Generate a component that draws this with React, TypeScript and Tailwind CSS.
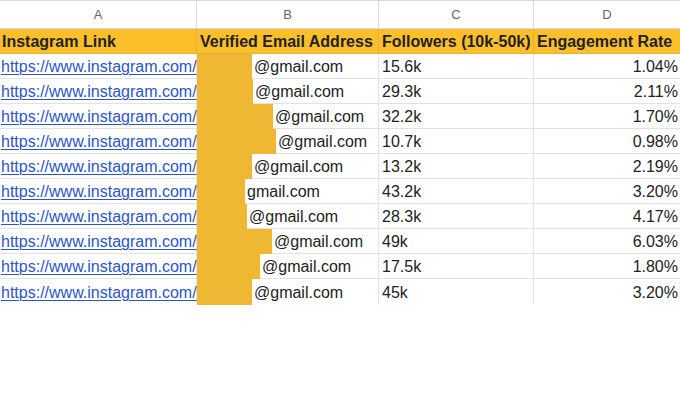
const rows = [
  { cover: 55, email: '@gmail.com', followers: '15.6k', rate: '1.04%' },
  { cover: 56, email: '@gmail.com', followers: '29.3k', rate: '2.11%' },
  { cover: 76, email: '@gmail.com', followers: '32.2k', rate: '1.70%' },
  { cover: 79, email: '@gmail.com', followers: '10.7k', rate: '0.98%' },
  { cover: 55, email: '@gmail.com', followers: '13.2k', rate: '2.19%' },
  { cover: 48, email: 'gmail.com', followers: '43.2k', rate: '3.20%' },
  { cover: 50, email: '@gmail.com', followers: '28.3k', rate: '4.17%' },
  { cover: 75, email: '@gmail.com', followers: '49k', rate: '6.03%' },
  { cover: 63, email: '@gmail.com', followers: '17.5k', rate: '1.80%' },
  { cover: 55, email: '@gmail.com', followers: '45k', rate: '3.20%' },
];

const cols = 'grid grid-cols-[197px_182px_155px_146px]';

export default function App() {
  return (
    <div className="w-[680px] h-[409px] overflow-hidden bg-white font-['Liberation_Sans',Arial,sans-serif] text-[16px] text-[#222]">
      {/* Column letters */}
      <div className={`${cols} h-[29px] border-t border-[#dadada] text-[13px] text-[#666]`}>
        {['A', 'B', 'C', 'D'].map((l, i) => (
          <div
            key={l}
            className={`flex items-center justify-center pt-[1px] border-b border-[#dadada] ${i < 3 ? 'border-r' : ''}`}
          >
            {l}
          </div>
        ))}
      </div>

      {/* Header row */}
      <div className={`${cols} h-[25px] bg-[#fbbf2c] font-bold leading-none`}>
        <div className="flex items-center px-[2px] pt-[2px] border-r border-b border-[#e3b13a]">Instagram Link</div>
        <div className="flex items-center px-[3px] pt-[2px] border-r border-b border-[#e3b13a] whitespace-nowrap">
          Verified Email Address
        </div>
        <div className="flex items-center px-[3px] pt-[2px] border-r border-b border-[#e3b13a] whitespace-nowrap">
          Followers (10k-50k)
        </div>
        <div className="flex items-center px-[3px] pt-[2px] border-b border-[#e3b13a] whitespace-nowrap">
          Engagement Rate
        </div>
      </div>

      {/* Data rows */}
      {rows.map((r, i) => {
        const line = i < rows.length - 1 ? 'border-b' : '';
        return (
          <div key={i} className={`${cols} h-[25px] leading-none`}>
            <div className={`flex items-center px-[1px] pt-[2px] border-r border-[#e2e2e2] ${line}`}>
              <span className="text-[#2b55c9] underline underline-offset-2 decoration-1 whitespace-nowrap">
                https://www.instagram.com/
              </span>
            </div>
            <div className={`flex items-stretch border-r border-[#e2e2e2] ${line} whitespace-nowrap`}>
              <div className="shrink-0 bg-[#f0b732] -mb-px" style={{ width: r.cover }} />
              <span className="flex items-center pl-[2px] pt-[2px]">{r.email}</span>
            </div>
            <div className={`flex items-center px-[3px] pt-[2px] border-r border-[#e2e2e2] ${line}`}>{r.followers}</div>
            <div className={`flex items-center justify-end pr-[2px] pt-[2px] border-[#e2e2e2] ${line}`}>{r.rate}</div>
          </div>
        );
      })}
    </div>
  );
}
